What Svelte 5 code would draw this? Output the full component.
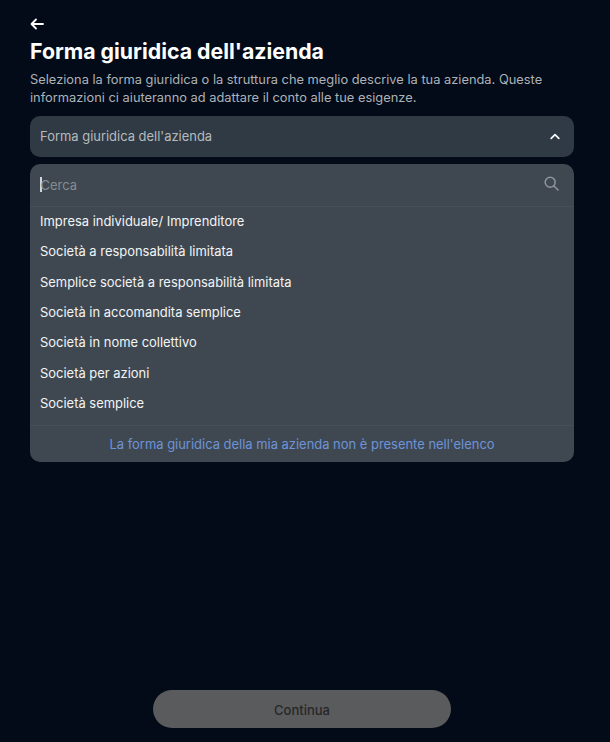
<script>
  const items = [
    'Impresa individuale/ Imprenditore',
    'Società a responsabilità limitata',
    'Semplice società a responsabilità limitata',
    'Società in accomandita semplice',
    'Società in nome collettivo',
    'Società per azioni',
    'Società semplice'
  ];
</script>

<div class="page">
  <main class="content">
    <button class="back" aria-label="Indietro">
      <svg width="14" height="12" viewBox="0 0 14 12" fill="none" stroke="#fff" stroke-width="1.8" stroke-linecap="round" stroke-linejoin="round"><path d="M13 6H1.5M6 1.5 1.5 6 6 10.5"/></svg>
    </button>
    <h1>Forma giuridica dell'azienda</h1>
    <p class="desc">Seleziona la forma giuridica o la struttura che meglio descrive la tua azienda. Queste informazioni ci aiuteranno ad adattare il conto alle tue esigenze.</p>
    <div class="select">
      <span class="label">Forma giuridica dell'azienda</span>
      <svg width="10" height="7" viewBox="0 0 10 7" fill="none" stroke="#f2f4f5" stroke-width="1.8" stroke-linecap="round" stroke-linejoin="round"><path d="M1.2 5.3 5 1.6l3.8 3.7"/></svg>
    </div>
    <div class="panel">
      <div class="search">
        <span class="caret"></span><span class="placeholder">Cerca</span>
        <svg class="glass" width="15" height="15" viewBox="0 0 15 15" fill="none" stroke="#8e959b" stroke-width="1.5" stroke-linecap="round"><circle cx="6.2" cy="6.2" r="5"/><path d="m10 10 4 4"/></svg>
      </div>
      <ul>
        {#each items as item}
          <li>{item}</li>
        {/each}
      </ul>
      <div class="foot">La forma giuridica della mia azienda non è presente nell'elenco</div>
    </div>
  </main>
  <div class="actions">
    <button class="continue">Continua</button>
  </div>
</div>

<style>
  :global(body) {
    margin: 0;
    background: #020b17;
    font-family: Inter, "Liberation Sans", sans-serif;
  }
  .page {
    width: 610px;
    height: 742px;
    display: flex;
    flex-direction: column;
    justify-content: space-between;
    box-sizing: border-box;
    padding: 0 36px 14px 30px;
    overflow: hidden;
  }
  .content { display: flex; flex-direction: column; }
  .back {
    margin-top: 17px;
    height: 14px;
    width: 14px;
    padding: 0;
    border: 0;
    background: none;
    display: flex;
    align-items: center;
  }
  h1 {
    margin: 6px 0 0;
    font-size: 21.3px;
    line-height: 28px;
    font-weight: 700;
    color: #fff;
    letter-spacing: 0;
  }
  .desc {
    margin: 6px 0 0;
    font-size: 12.85px;
    line-height: 17.6px;
    color: #aeb2b7;
  }
  .select {
    margin-top: 9.8px;
    height: 41px;
    border-radius: 10px;
    background: #2f3a44;
    padding: 0 14px 0 10px;
    display: flex;
    align-items: center;
    justify-content: space-between;
    font-size: 12.95px;
    color: #b6babd;
  }
  .label { margin-top: -1px; }
  .panel {
    margin-top: 7px;
    border-radius: 10px;
    background: #3f4851;
    display: flex;
    flex-direction: column;
  }
  .search {
    height: 43px;
    box-sizing: border-box;
    padding: 0 15px 0 10px;
    display: flex;
    align-items: center;
    border-bottom: 1px solid #464f58;
    font-size: 12.95px;
  }
  .caret { width: 1.5px; height: 15px; background: #cfd6de; }
  .placeholder { color: #868c92; flex: 1; margin-left: -1px; }
  .glass { margin-top: -3px; }
  ul { list-style: none; margin: 0; padding: 0; }
  li {
    height: 30.33px;
    line-height: 28.6px;
    padding-left: 10px;
    font-size: 12.95px;
    color: #f3f4f5;
  }
  .foot {
    margin-top: 6px;
    height: 37px;
    border-top: 1px solid #464f58;
    box-sizing: border-box;
    display: flex;
    align-items: center;
    justify-content: center;
    font-size: 12.95px;
    color: #6e93d8;
  }
  .actions { display: flex; justify-content: center; }
  .continue {
    width: 298px;
    height: 38px;
    border: 0;
    border-radius: 19px;
    background: #5a5b5c;
    color: #26272a;
    padding-top: 2px;
    font: 500 13px Inter, "Liberation Sans", sans-serif;
  }
</style>
